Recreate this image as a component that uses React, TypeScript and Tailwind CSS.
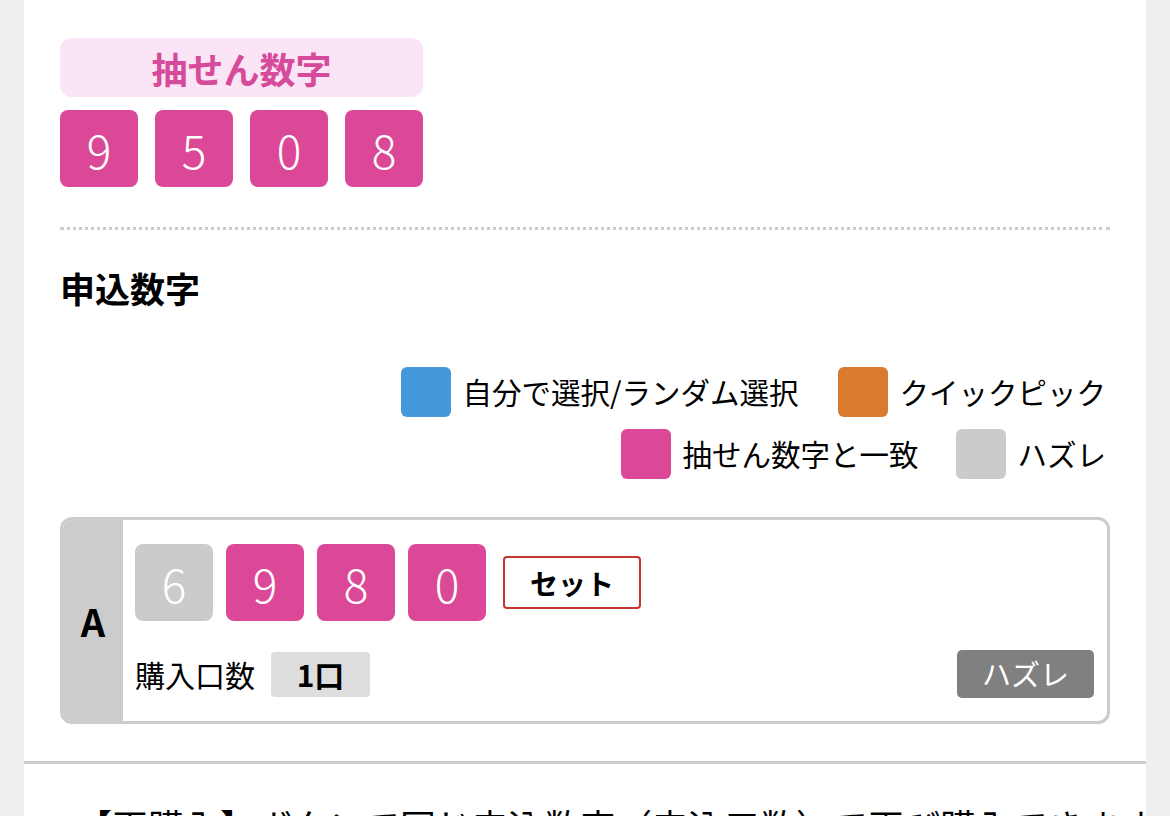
const jp = "font-['Noto_Sans_CJK_JP','Noto_Sans',sans-serif]";

// ─── Number tile ──────────────────────────────────────────────────────────────

function Digit({ n, miss = false }: { n: string; miss?: boolean }) {
    return (
        <div
            className={`flex h-[77px] w-[78px] items-center justify-center rounded-[8px] text-[46px] font-light leading-none text-white ${
                miss ? "bg-[#cbcbcb]" : "bg-[#dc4898]"
            }`}
        >
            {n}
        </div>
    );
}

// ─── Legend item ──────────────────────────────────────────────────────────────

function LegendItem({ color, label }: { color: string; label: string }) {
    return (
        <div className="flex items-center gap-[11px]">
            <div className={`h-[50px] w-[50px] rounded-[6px] ${color}`} />
            <span className="text-[29.5px] leading-none text-black">{label}</span>
        </div>
    );
}

// ─── Page ─────────────────────────────────────────────────────────────────────

export default function App() {
    const drawn = ["9", "5", "0", "8"];

    return (
        <div className={`h-[816px] overflow-hidden bg-[#eeeeee] ${jp}`}>
            <div className="mx-6 h-full bg-white">
                <div className="px-9 pt-[38px]">
                    {/* Draw numbers */}
                    <div className="w-[363px]">
                        <div className="flex h-[59px] items-center justify-center rounded-[12px] bg-[#fae4f5] text-[36px] font-bold text-[#d54a9a]">
                            抽せん数字
                        </div>
                        <div className="mt-[13px] flex justify-between">
                            {drawn.map((d, i) => (
                                <Digit key={i} n={d} />
                            ))}
                        </div>
                    </div>

                    <div className="mt-10 border-t-[3px] border-dotted border-[#cccccc]" />

                    <h2 className="mt-[34px] text-[35px] font-bold leading-[48px] text-black">申込数字</h2>

                    {/* Legend */}
                    <div className="mt-[55px] flex flex-col items-end gap-[12px] pr-1">
                        <div className="flex gap-[40px]">
                            <LegendItem color="bg-[#4598db]" label="自分で選択/ランダム選択" />
                            <LegendItem color="bg-[#d87b2f]" label="クイックピック" />
                        </div>
                        <div className="flex gap-[38px]">
                            <LegendItem color="bg-[#dc4898]" label="抽せん数字と一致" />
                            <LegendItem color="bg-[#cbcbcb]" label="ハズレ" />
                        </div>
                    </div>

                    {/* Entry A */}
                    <div className="mt-[38px] flex h-[207px] overflow-hidden rounded-[12px] border-[3px] border-[#cccccc]">
                        <div className="flex w-[60px] shrink-0 items-center justify-center bg-[#cccccc] text-[38px] font-bold text-black">
                            A
                        </div>
                        <div className="flex flex-1 flex-col pl-3 pr-[13px] pt-[24px]">
                            <div className="flex items-center gap-[13px]">
                                <Digit n="6" miss />
                                <Digit n="9" />
                                <Digit n="8" />
                                <Digit n="0" />
                                <div className="ml-1 flex h-[53px] w-[138px] items-center justify-center rounded-[4px] border-2 border-[#c3352f] text-[28px] font-bold text-black">
                                    セット
                                </div>
                            </div>
                            <div className="mt-[29px] flex items-center">
                                <span className="text-[30px] leading-none text-black">購入口数</span>
                                <div className="ml-4 flex h-[45px] w-[99px] items-center justify-center rounded-[4px] bg-[#dddddd] text-[30px] font-bold text-black">
                                    1口
                                </div>
                                <div className="ml-auto flex h-[48px] w-[137px] items-center justify-center rounded-[5px] bg-[#808080] text-[29px] text-white">
                                    ハズレ
                                </div>
                            </div>
                        </div>
                    </div>
                </div>

                <div className="mt-[37px] border-t-[3px] border-[#cccccc]" />

                <p className="mt-[37px] whitespace-nowrap pl-[52px] text-[36px] leading-[48px] text-black">
                    【再購入】ボタンで同じ申込数字（申込口数）で再び購入できます
                </p>
            </div>
        </div>
    );
}
